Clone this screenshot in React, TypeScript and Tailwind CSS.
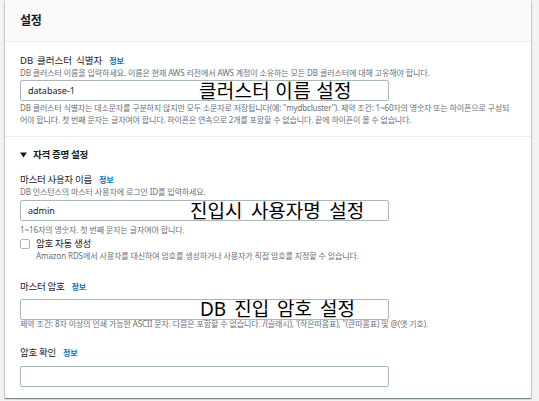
import React from "react";

function Label({ text, cls }: { text: string; cls?: string }) {
  return (
    <div className="flex items-center h-[12px] leading-[12px]">
      <span className={"text-[9.5px] text-[#16191f] " + (cls ?? "tracking-[-0.3px]")}>{text}</span>
      <span className="ml-[7px] text-[8px] font-bold text-[#0073bb]">정보</span>
    </div>
  );
}

function Overlay({ text, left, cls }: { text: string; left: number; cls: string }) {
  return (
    <span
      className={"absolute top-1/2 -translate-y-1/2 whitespace-nowrap text-[19px] leading-[19px] text-black " + cls}
      style={{ left }}
    >
      {text}
    </span>
  );
}

function Input({ value, overlay, left, cls }: { value?: string; overlay?: string; left?: number; cls?: string }) {
  return (
    <div className="relative h-[21px] w-[369px] rounded-[2px] border border-[#aab7b8] bg-white px-[7px] flex items-center text-[9px] text-[#16191f]">
      <span>{value}</span>
      {overlay ? <Overlay text={overlay} left={left ?? 0} cls={cls ?? ""} /> : null}
    </div>
  );
}

export default function App() {
  return (
    <div className="w-[539px] h-[401px] overflow-hidden bg-[#f2f3f3] font-['Noto_Sans','Noto_Sans_CJK_KR',sans-serif]">
      <div className="ml-[5px] w-[526px] h-[398px] overflow-hidden bg-white shadow-[0_1px_1px_0_rgba(0,28,36,0.3),1px_1px_1px_0_rgba(0,28,36,0.15),-1px_1px_1px_0_rgba(0,28,36,0.15)]">
        <div className="h-[42px] bg-[#fafafa] border-b border-[#eaeded] px-[15px] flex items-center">
          <span className="text-[12px] font-bold text-[#16191f] tracking-[-0.2px]">설정</span>
        </div>

        <div className="px-[15px] pt-[13px] pb-[10px]">
          <Label text="DB 클러스터 식별자" cls="tracking-[0px] [word-spacing:1.5px]" />
          <div className="h-[11px] leading-[11px] text-[8px] tracking-[-0.1px] text-[#687078] whitespace-nowrap">
            DB 클러스터 이름을 입력하세요. 이름은 현재 AWS 리전에서 AWS 계정이 소유하는 모든 DB 클러스터에 대해 고유해야 합니다.
          </div>
          <div className="mt-[2px]">
            <Input value="database-1" overlay="클러스터 이름 설정" left={178} cls="tracking-[0.3px]" />
          </div>
          <div className="mt-[1px] text-[8px] leading-[12px] tracking-[-0.15px] text-[#687078] whitespace-nowrap">
            <div>DB 클러스터 식별자는 대소문자를 구분하지 않지만 모두 소문자로 저장됩니다(예: "mydbcluster"). 제약 조건: 1~60자의 영숫자 또는 하이픈으로 구성되</div>
            <div>어야 합니다. 첫 번째 문자는 글자여야 합니다. 하이픈은 연속으로 2개를 포함할 수 없습니다. 끝에 하이픈이 올 수 없습니다.</div>
          </div>
        </div>

        <div className="border-t border-[#eaeded] px-[15px]">
          <div className="mt-[11px] flex items-center h-[14px]">
            <svg width="7" height="6" viewBox="0 0 7 6" className="mr-[6px]">
              <polygon points="0,0.5 7,0.5 3.5,5.5" fill="#16191f" />
            </svg>
            <span className="text-[9.5px] font-bold tracking-[-0.3px] text-[#16191f]">자격 증명 설정</span>
          </div>

          <div className="mt-[12px]">
            <Label text="마스터 사용자 이름" />
          </div>
          <div className="h-[11px] leading-[11px] text-[8px] tracking-[-0.1px] text-[#687078] whitespace-nowrap">
            DB 인스턴스의 마스터 사용자에 로그인 ID를 입력하세요.
          </div>
          <div className="mt-[3px]">
            <Input value="admin" overlay="진입시 사용자명 설정" left={169} cls="[word-spacing:3.5px]" />
          </div>
          <div className="mt-[3px] h-[12px] leading-[12px] text-[8px] tracking-[-0.1px] text-[#687078] whitespace-nowrap">
            1~16자의 영숫자. 첫 번째 문자는 글자여야 합니다.
          </div>
          <div className="mt-[2px] flex items-center h-[12px]">
            <div className="w-[10px] h-[10px] rounded-[2px] border border-[#aab7b8] bg-white" />
            <span className="ml-[6px] text-[9.5px] tracking-[-0.3px] text-[#16191f]">암호 자동 생성</span>
          </div>
          <div className="ml-[16px] h-[12px] leading-[12px] text-[8px] tracking-[-0.1px] text-[#687078] whitespace-nowrap">
            Amazon RDS에서 사용자를 대신하여 암호를 생성하거나 사용자가 직접 암호를 지정할 수 있습니다.
          </div>

          <div className="mt-[19px]">
            <Label text="마스터 암호" />
          </div>
          <div className="mt-[6px]">
            <Input overlay="DB 진입 암호 설정" left={179} cls="[word-spacing:3px] mt-[-1px]" />
          </div>
          <div className="h-[8px] leading-[8px] text-[8px] tracking-[-0.1px] text-[#687078] whitespace-nowrap">
            제약 조건: 8자 이상의 인쇄 가능한 ASCII 문자. 다음은 포함할 수 없습니다. /(슬래시), '(작은따옴표), "(큰따옴표) 및 @(앳 기호).
          </div>

          <div className="mt-[19px]">
            <Label text="암호 확인" />
          </div>
          <div className="mt-[7px]">
            <Input />
          </div>
        </div>
      </div>
    </div>
  );
}
